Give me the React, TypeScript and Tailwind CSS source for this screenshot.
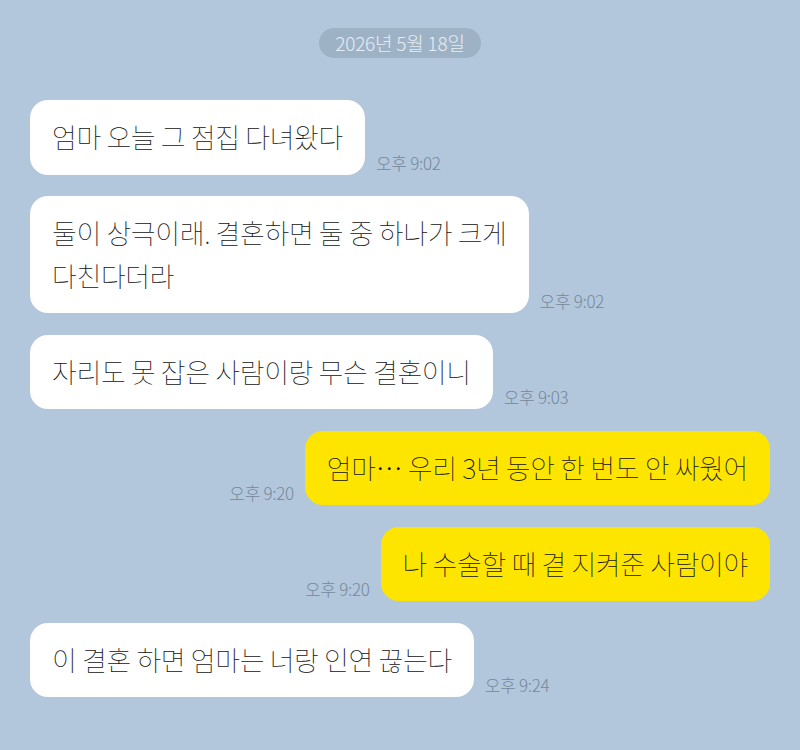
import React from 'react'

// ─── Chat data ────────────────────────────────────────────────────────────────
interface Message {
  id: number
  mine: boolean
  lines: string[]
  time: string
}

const MESSAGES: Message[] = [
  { id: 1, mine: false, lines: ['엄마 오늘 그 점집 다녀왔다'], time: '오후 9:02' },
  {
    id: 2,
    mine: false,
    lines: ['둘이 상극이래. 결혼하면 둘 중 하나가 크게', '다친다더라'],
    time: '오후 9:02',
  },
  { id: 3, mine: false, lines: ['자리도 못 잡은 사람이랑 무슨 결혼이니'], time: '오후 9:03' },
  { id: 4, mine: true, lines: ['엄마… 우리 3년 동안 한 번도 안 싸웠어'], time: '오후 9:20' },
  { id: 5, mine: true, lines: ['나 수술할 때 곁 지켜준 사람이야'], time: '오후 9:20' },
  { id: 6, mine: false, lines: ['이 결혼 하면 엄마는 너랑 인연 끊는다'], time: '오후 9:24' },
]

// ─── Bubble row ───────────────────────────────────────────────────────────────
function Bubble({ msg }: { msg: Message }) {
  const time = (
    <span className="mb-[4px] shrink-0 text-[17px] font-light leading-none tracking-[-0.3px] text-[#76879b]">
      {msg.time}
    </span>
  )
  return (
    <div className={`flex items-end gap-[11px] ${msg.mine ? 'justify-end' : 'justify-start'}`}>
      {msg.mine && time}
      <div
        className={`rounded-[18px] px-[22px] py-[16px] text-[27px] font-thin leading-[42.5px] tracking-[-0.4px] text-[#111] ${
          msg.mine ? 'bg-[#fee500]' : 'bg-white'
        }`}
      >
        {msg.lines.map((line) => (
          <div key={line}>{line}</div>
        ))}
      </div>
      {!msg.mine && time}
    </div>
  )
}

// ─── Main ─────────────────────────────────────────────────────────────────────
export default function App() {
  return (
    <div className="h-[750px] w-[800px] overflow-hidden bg-[#b2c7dc] font-['Noto_Sans_CJK_KR','Noto_Sans',sans-serif]">
      <div className="flex justify-center pt-[28px]">
        <div className="flex h-[30px] items-center rounded-full bg-[#9eb2c6] px-[16px] text-[19px] font-light tracking-[-0.2px] text-[#e6edf4]">
          2026년 5월 18일
        </div>
      </div>
      <div className="flex flex-col gap-[21.5px] px-[30px] pt-[42px]">
        {MESSAGES.map((m) => (
          <Bubble key={m.id} msg={m} />
        ))}
      </div>
    </div>
  )
}
